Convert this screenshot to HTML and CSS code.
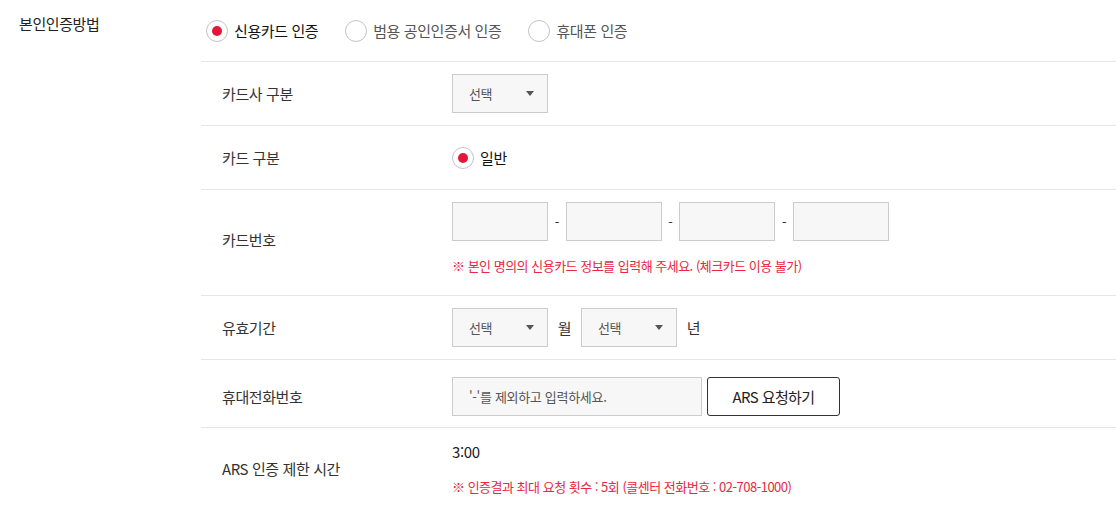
FILE: index.html
```html
<!DOCTYPE html>
<html lang="ko">
<head>
  <meta charset="UTF-8">
  <meta name="viewport" content="width=device-width, initial-scale=1.0">
  <title>본인인증</title>
  <link rel="stylesheet" href="styles.css">
</head>
<body>
  <div class="auth-form">
    <div class="auth-title">본인인증방법</div>
    <div class="auth-body">
      <div class="method-row">
        <label class="radio checked"><span class="radio-dot"></span>신용카드 인증</label>
        <label class="radio"><span class="radio-dot"></span>범용 공인인증서 인증</label>
        <label class="radio"><span class="radio-dot"></span>휴대폰 인증</label>
      </div>

      <div class="row">
        <div class="row-label">카드사 구분</div>
        <div class="row-field">
          <div class="select">선택<span class="arrow"></span></div>
        </div>
      </div>

      <div class="row">
        <div class="row-label">카드 구분</div>
        <div class="row-field">
          <label class="radio checked"><span class="radio-dot"></span>일반</label>
        </div>
      </div>

      <div class="row row-card">
        <div class="row-label">카드번호</div>
        <div class="row-field stack">
          <div class="inline">
            <input class="box" type="text">
            <span class="dash">-</span>
            <input class="box" type="text">
            <span class="dash">-</span>
            <input class="box" type="text">
            <span class="dash">-</span>
            <input class="box" type="text">
          </div>
          <p class="notice">※ 본인 명의의 신용카드 정보를 입력해 주세요. (체크카드 이용 불가)</p>
        </div>
      </div>

      <div class="row">
        <div class="row-label">유효기간</div>
        <div class="row-field inline">
          <div class="select">선택<span class="arrow"></span></div>
          <span class="unit">월</span>
          <div class="select">선택<span class="arrow"></span></div>
          <span class="unit">년</span>
        </div>
      </div>

      <div class="row row-phone">
        <div class="row-label">휴대전화번호</div>
        <div class="row-field inline">
          <input class="box phone" type="text" placeholder="'-'를 제외하고 입력하세요.">
          <button class="btn-ars">ARS 요청하기</button>
        </div>
      </div>

      <div class="row row-ars">
        <div class="row-label">ARS 인증 제한 시간</div>
        <div class="row-field stack">
          <div class="timer">3:00</div>
          <p class="notice">※ 인증결과 최대 요청 횟수 : 5회 (콜센터 전화번호 : 02-708-1000)</p>
        </div>
      </div>
    </div>
  </div>
</body>
</html>
```

FILE: styles.css
```css
body {
  margin: 0;
  background: #fff;
  font-family: "Noto Sans CJK KR", "Noto Sans", sans-serif;
  color: #333;
  letter-spacing: -0.4px;
}
.auth-form {
  display: flex;
}
.auth-title {
  width: 182px;
  padding: 14px 0 0 19px;
  font-size: 15px;
  line-height: 20px;
  color: #222;
}
.auth-body {
  flex: 1;
}
.method-row {
  display: flex;
  align-items: center;
  gap: 27px;
  height: 61px;
  padding-left: 5px;
  border-bottom: 1px solid #e5e5e5;
}
.radio {
  display: flex;
  align-items: center;
  gap: 6px;
  font-size: 15px;
  color: #555;
}
.radio.checked {
  color: #111;
}
.radio-dot {
  width: 20px;
  height: 20px;
  border: 1px solid #c4c4c4;
  border-radius: 50%;
  background: #fff;
  position: relative;
}
.radio.checked .radio-dot::after {
  content: "";
  position: absolute;
  left: 5px;
  top: 5px;
  width: 10px;
  height: 10px;
  border-radius: 50%;
  background: #e4173a;
}
.row {
  display: flex;
  align-items: center;
  padding: 12px 0;
  border-bottom: 1px solid #e5e5e5;
}
.row-label {
  width: 230px;
  padding-left: 21px;
  font-size: 15px;
  color: #333;
}
.row-field {
  min-height: 39px;
  display: flex;
  align-items: center;
}
.row-field.stack {
  flex-direction: column;
  align-items: flex-start;
}
.inline {
  display: flex;
  align-items: center;
}
.select {
  box-sizing: border-box;
  width: 96px;
  height: 39px;
  padding: 0 16px;
  display: flex;
  align-items: center;
  justify-content: space-between;
  background: #f7f7f7;
  border: 1px solid #ccc;
  font-size: 13px;
  color: #555;
}
.arrow {
  width: 0;
  height: 0;
  margin-right: -3px;
  border-left: 4.5px solid transparent;
  border-right: 4.5px solid transparent;
  border-top: 5px solid #555;
}
.unit {
  width: 33px;
  text-align: center;
  font-size: 15px;
  color: #333;
}
.box {
  box-sizing: border-box;
  width: 96px;
  height: 39px;
  margin: 0;
  padding: 0 16px;
  background: #f7f7f7;
  border: 1px solid #ccc;
  font-family: inherit;
  font-size: 13px;
  letter-spacing: -0.3px;
  outline: none;
}
.box::placeholder {
  color: #555;
}
.dash {
  width: 17.6px;
  text-align: center;
  font-size: 13px;
  color: #333;
}
.notice {
  margin: 15px 0 0;
  font-size: 13px;
  line-height: 20px;
  letter-spacing: -0.5px;
  color: #ea2742;
}
.row-card {
  padding-bottom: 19px;
}
.row-phone {
  padding: 17px 0 11px;
}
.box.phone {
  width: 250px;
}
.btn-ars {
  box-sizing: border-box;
  width: 133px;
  height: 39px;
  margin-left: 5px;
  background: #fff;
  border: 1px solid #333;
  border-radius: 3px;
  font-family: inherit;
  font-size: 15px;
  letter-spacing: -0.6px;
  color: #222;
}
.row-ars {
  padding: 12px 0 16px;
  border-bottom: none;
}
.timer {
  font-size: 15px;
  line-height: 24px;
  color: #222;
}
.row-ars .notice {
  margin-top: 13px;
}
```
